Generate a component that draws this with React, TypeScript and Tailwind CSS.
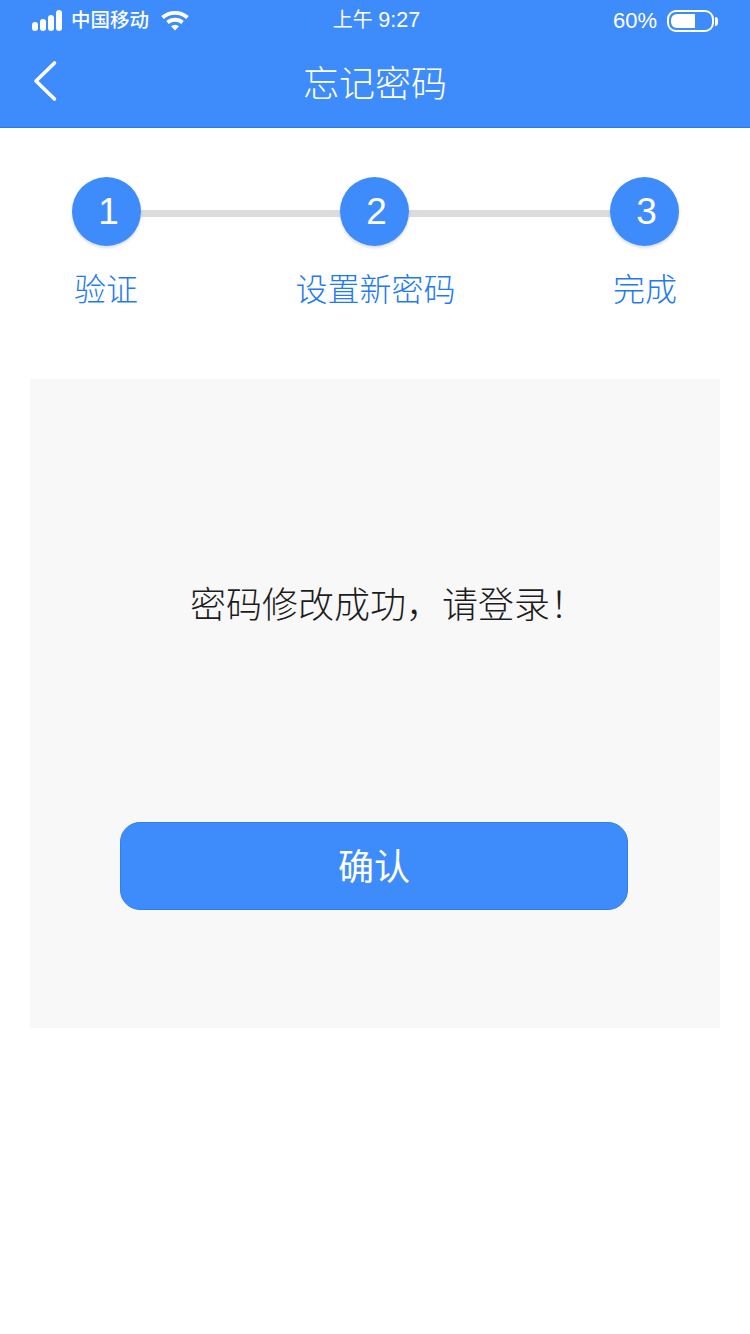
import React from "react";

const cjk = '"Liberation Sans", "Noto Sans CJK SC", sans-serif';

const SignalBars = () => (
  <div className="flex items-end gap-[2px] h-[21px] -mt-[2px]">
    <span className="w-[6px] h-[9px] bg-white rounded-full" />
    <span className="w-[6px] h-[12px] bg-white rounded-full" />
    <span className="w-[6px] h-[16px] bg-white rounded-full" />
    <span className="w-[6px] h-[21px] bg-white rounded-full" />
  </div>
);

const WifiIcon = () => (
  <svg width="28" height="21" viewBox="0 0 28 21" fill="none" className="ml-[12px] -mt-[2px]">
    <path d="M1.500 7.500C8.500 1.200 19.500 1.200 26.500 7.500" stroke="white" strokeWidth="3.800" />
    <path d="M6.500 12.500C10.800 8.800 17.200 8.800 21.500 12.500" stroke="white" strokeWidth="3.800" />
    <path d="M10 16.300L14 20.500L18 16.300C15.500 14.300 12.500 14.300 10 16.300Z" fill="white" />
  </svg>
);

const Battery = () => (
  <div className="flex items-center ml-[10px]">
    <div className="w-[47px] h-[22px] rounded-[9px] border-2 border-white p-[2px]">
      <div className="w-[24px] h-full bg-white rounded-l-[6px]" />
    </div>
    <span className="w-[3px] h-[9px] bg-white rounded-r-full ml-[1px]" />
  </div>
);

const Step = ({ n }: { n: number }) => (
  <div className="w-[69px] h-[69px] shrink-0 pl-[4px] rounded-full bg-[#3e8cfb] text-white flex items-center justify-center text-[37px] leading-none shadow-[0_2px_3px_rgba(0,0,0,0.14)] z-10">
    {n}
  </div>
);

const App = () => {
  return (
    <div className="w-[750px] h-[1334px] bg-white overflow-hidden" style={{ fontFamily: cjk }}>
      {/* header */}
      <div className="h-[128px] bg-[#3e8cfb] border-b border-[#2b7be6] text-white">
        <div className="h-[41px] pt-[1px] px-[32px] grid grid-cols-[1fr_auto_1fr] items-center">
          <div className="flex items-center">
            <SignalBars />
            <span className="ml-[9px] text-[19.500px] leading-none font-medium">中国移动</span>
            <WifiIcon />
          </div>
          <div className="text-[20px] leading-none pl-[3px]">
            上午 <span className="text-[21.500px]">9:27</span>
          </div>
          <div className="flex items-center justify-end">
            <span className="text-[22px] leading-none">60%</span>
            <Battery />
          </div>
        </div>
        <div className="h-[86px] pt-[1px] px-[32px] grid grid-cols-[1fr_auto_1fr] items-center">
          <svg width="26" height="42" viewBox="0 0 26 42" fill="none" className="-mt-[7px]">
            <path d="M22.500 3L4 21L22.500 39" stroke="white" strokeWidth="3.600" strokeLinecap="round" strokeLinejoin="round" />
          </svg>
          <div className="text-[36px] leading-none font-light">忘记密码</div>
          <div />
        </div>
      </div>

      {/* steps */}
      <div className="pt-[49px] pl-[72px] flex items-center">
        <Step n={1} />
        <div className="w-[199px] h-[7px] mt-[3px] bg-[#dcdcdc]" />
        <Step n={2} />
        <div className="w-[201px] h-[7px] mt-[3px] bg-[#dcdcdc]" />
        <Step n={3} />
      </div>
      <div className="mt-[26px] pl-[74px] pr-[73px] flex justify-between text-[32px] leading-[36px] font-light text-[#1f7af5]">
        <span>验证</span>
        <span>设置新密码</span>
        <span>完成</span>
      </div>

      {/* result card */}
      <div className="mx-[30px] mt-[71px] h-[649px] bg-[#f8f8f8] flex flex-col items-center">
        <div className="mt-[205px] h-[44px] pl-[26px] text-[36px] leading-[44px] font-light text-[#1c1c1c]">
          密码修改成功，请登录！
        </div>
        <button className="mt-[194px] -ml-[2px] pt-[3px] w-[508px] h-[88px] rounded-[20px] bg-[#3e8cfb] border border-[#2f80ee] text-white text-[36px] leading-none">
          确认
        </button>
      </div>
    </div>
  );
};

export default App;
